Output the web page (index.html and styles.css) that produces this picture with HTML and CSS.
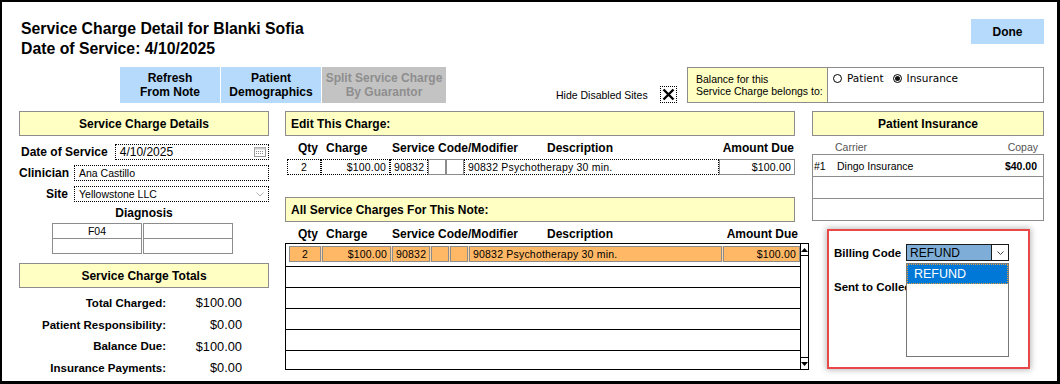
FILE: index.html
```html
<!DOCTYPE html>
<html lang="en">
<head>
    <meta charset="UTF-8">
    <title>Service Charge Detail</title>
    <link rel="stylesheet" href="styles.css">
</head>
<body>
    <div class="frame">
        <div class="top">
            <h1 class="title">Service Charge Detail for Blanki Sofia<br>Date of Service: 4/10/2025</h1>
            <button class="btn done">Done</button>
        </div>

        <div class="toolbar">
            <button class="btn first">Refresh<br>From Note</button>
            <button class="btn">Patient<br>Demographics</button>
            <button class="btn disabled">Split Service Charge<br>By Guarantor</button>
            <div class="hide-sites">
                <span>Hide Disabled Sites</span>
                <span class="xbox">
                    <svg width="15" height="15" viewBox="0 0 15 15"><path d="M2.5 2.5 L12.5 12.5 M12.5 2.5 L2.5 12.5" stroke="#000" stroke-width="2.4"/></svg>
                </span>
            </div>
            <div class="balance">
                <div class="balance-label">Balance for this<br>Service Charge belongs to:</div>
                <div class="balance-opts">
                    <span class="radio"></span><span class="opt">Patient</span>
                    <span class="radio checked"></span><span class="opt">Insurance</span>
                </div>
            </div>
        </div>

        <div class="panels">
            <!-- left column -->
            <div class="col-left">
                <div class="head">Service Charge Details</div>
                <div class="field first-field">
                    <label class="lbl wide">Date of Service</label>
                    <div class="input date">
                        <span>4/10/2025</span>
                        <svg width="12" height="10" viewBox="0 0 12 10"><rect x="0.5" y="0.5" width="11" height="9" fill="#fff" stroke="#9a9a9a"/><rect x="0.5" y="0.5" width="11" height="2" fill="#c8c8c8"/><g fill="#8a8a8a"><rect x="2" y="4" width="1" height="1"/><rect x="4" y="4" width="1" height="1"/><rect x="6" y="4" width="1" height="1"/><rect x="8" y="4" width="1" height="1"/><rect x="2" y="6" width="1" height="1"/><rect x="4" y="6" width="1" height="1"/><rect x="6" y="6" width="1" height="1"/><rect x="8" y="6" width="1" height="1"/></g></svg>
                    </div>
                </div>
                <div class="field">
                    <label class="lbl">Clinician</label>
                    <div class="input">Ana Castillo</div>
                </div>
                <div class="field">
                    <label class="lbl">Site</label>
                    <div class="input">
                        <span>Yellowstone LLC</span>
                        <svg width="8" height="5" viewBox="0 0 8 5"><path d="M0.5 0.5 L4 4 L7.5 0.5" fill="none" stroke="#b0b0b0"/></svg>
                    </div>
                </div>
                <div class="diag-label">Diagnosis</div>
                <div class="diag">
                    <div class="dcell">F04</div>
                    <div class="dcell"></div>
                    <div class="dcell last"></div>
                    <div class="dcell last"></div>
                </div>

                <div class="head totals-head">Service Charge Totals</div>
                <div class="totals">
                    <span class="t-lbl">Total Charged:</span><span class="t-val">$100.00</span>
                    <span class="t-lbl">Patient Responsibility:</span><span class="t-val">$0.00</span>
                    <span class="t-lbl">Balance Due:</span><span class="t-val">$100.00</span>
                    <span class="t-lbl">Insurance Payments:</span><span class="t-val">$0.00</span>
                </div>
            </div>

            <!-- middle column -->
            <div class="col-mid">
                <div class="head text-left">Edit This Charge:</div>
                <div class="cols">
                    <span class="h-qty">Qty</span>
                    <span class="h-charge">Charge</span>
                    <span class="h-code">Service Code/Modifier</span>
                    <span class="h-desc">Description</span>
                    <span class="h-amt">Amount Due</span>
                </div>
                <div class="edit-row">
                    <div class="cell dot qty">2</div>
                    <div class="cell dot charge">$100.00</div>
                    <div class="cell dot code">90832</div>
                    <div class="cell mod"></div>
                    <div class="cell mod"></div>
                    <div class="cell dot desc">90832 Psychotherapy 30 min.</div>
                    <div class="cell amt">$100.00</div>
                </div>

                <div class="head text-left all-head">All Service Charges For This Note:</div>
                <div class="cols">
                    <span class="h-qty">Qty</span>
                    <span class="h-charge">Charge</span>
                    <span class="h-code">Service Code/Modifier</span>
                    <span class="h-desc">Description</span>
                    <span class="h-amt shift">Amount Due</span>
                </div>
                <div class="all-table">
                    <div class="rows">
                        <div class="trow">
                            <div class="sel-row">
                                <div class="cell qty">2</div>
                                <div class="cell charge">$100.00</div>
                                <div class="cell code">90832</div>
                                <div class="cell mod"></div>
                                <div class="cell mod"></div>
                                <div class="cell desc">90832 Psychotherapy 30 min.</div>
                                <div class="cell amt">$100.00</div>
                            </div>
                        </div>
                        <div class="trow"></div>
                        <div class="trow"></div>
                        <div class="trow"></div>
                        <div class="trow"></div>
                        <div class="trow"></div>
                    </div>
                    <div class="scrollbar">
                        <div class="sb-btn up"><svg width="7" height="4" viewBox="0 0 7 4"><path d="M0 4 L3.5 0 L7 4 Z" fill="#000"/></svg></div>
                        <div class="sb-btn down"><svg width="7" height="4" viewBox="0 0 7 4"><path d="M0 0 L3.5 4 L7 0 Z" fill="#000"/></svg></div>
                    </div>
                </div>
            </div>

            <!-- right column -->
            <div class="col-right">
                <div class="head">Patient Insurance</div>
                <div class="ins-cols"><span>Carrier</span><span>Copay</span></div>
                <div class="ins-table">
                    <div class="irow"><span class="num">#1</span><span class="carrier">Dingo Insurance</span><span class="copay">$40.00</span></div>
                    <div class="irow"></div>
                    <div class="irow"></div>
                </div>

                <div class="billing">
                    <div class="bc-row">
                        <span class="bc-lbl">Billing Code</span>
                        <div class="select">
                            <span>REFUND</span>
                            <span class="arrow"><svg width="7" height="4" viewBox="0 0 7 4"><path d="M0.5 0.5 L3.5 3.5 L6.5 0.5" fill="none" stroke="#444"/></svg></span>
                        </div>
                    </div>
                    <div class="bc-row sent">
                        <span class="bc-lbl">Sent to Collections</span>
                    </div>
                    <div class="droplist">
                        <div class="drop-item">REFUND</div>
                    </div>
                </div>
            </div>
        </div>
    </div>
</body>
</html>
```

FILE: styles.css
```css
body {
    margin: 0;
    font-family: "Liberation Sans", Arial, sans-serif;
    color: #000;
    background: #fff;
}
.frame {
    width: 1060px;
    height: 384px;
    box-sizing: border-box;
    border-style: solid;
    border-color: #000;
    border-width: 2px 3px 3px 2px;
    padding: 17px 13px 0 17px;
    overflow: hidden;
}
.top {
    display: flex;
    justify-content: space-between;
    align-items: flex-start;
}
.title {
    margin: 0;
    padding-left: 2px;
    font-size: 15.8px;
    line-height: 20px;
    font-weight: bold;
}
.btn {
    border: none;
    padding: 0;
    background: #b5dafc;
    color: #000;
    font: bold 12px/14px "Liberation Sans", Arial, sans-serif;
}
.done {
    width: 73px;
    height: 25px;
}
.toolbar {
    display: flex;
    height: 36px;
    margin-top: 8px;
}
.toolbar .btn {
    width: 100px;
    height: 36px;
    margin-right: 1px;
}
.toolbar .btn.first {
    margin-left: 101px;
}
.toolbar .btn.disabled {
    width: 124px;
    background: #c3c3c3;
    color: #8e8e8e;
}
.hide-sites {
    align-self: flex-end;
    display: flex;
    align-items: center;
    gap: 12px;
    margin-left: 109px;
    font-size: 10.5px;
}
.xbox {
    width: 17px;
    height: 17px;
    box-sizing: border-box;
    border: 1px dotted #000;
    display: flex;
    align-items: center;
    justify-content: center;
}
.balance {
    margin-left: auto;
    width: 357px;
    height: 36px;
    box-sizing: border-box;
    border: 1px solid #8c8c8c;
    display: flex;
}
.balance-label {
    width: 140px;
    box-sizing: border-box;
    background: #ffffc4;
    border-right: 1px solid #8c8c8c;
    padding: 5px 0 0 8px;
    font-size: 10.5px;
    line-height: 12px;
}
.balance-opts {
    display: flex;
    align-items: center;
    height: 12px;
    padding: 4px 0 0 5px;
    font-family: "DejaVu Sans", Verdana, sans-serif;
    font-size: 10.5px;
}
.radio {
    width: 9px;
    height: 9px;
    box-sizing: border-box;
    border: 1px solid #000;
    border-radius: 50%;
    margin-right: 5px;
    position: relative;
}
.radio.checked::after {
    content: "";
    position: absolute;
    left: 1px;
    top: 1px;
    width: 5px;
    height: 5px;
    border-radius: 50%;
    background: #111;
}
.opt {
    margin-right: 9px;
}

/* three columns */
.panels {
    display: flex;
    margin-top: 8px;
}
.col-left {
    width: 250px;
}
.col-mid {
    width: 510px;
    margin-left: 16px;
}
.col-right {
    width: 232px;
    margin-left: 17px;
}
.head {
    height: 25px;
    box-sizing: border-box;
    border: 1px solid #8c8c8c;
    background: #ffffc4;
    font-size: 12px;
    font-weight: bold;
    display: flex;
    align-items: center;
    justify-content: center;
}
.head.text-left {
    justify-content: flex-start;
    padding-left: 5px;
}

/* left */
.field {
    display: flex;
    align-items: center;
    gap: 6px;
    height: 16px;
    margin-top: 5px;
}
.field.first-field {
    margin-top: 8px;
}
.lbl {
    width: 49px;
    text-align: right;
    font-size: 12px;
    font-weight: bold;
}
.lbl.wide {
    width: auto;
    padding-left: 2px;
    margin-right: 1px;
}
.input {
    flex: 1;
    height: 16px;
    box-sizing: border-box;
    border: 1px dotted #000;
    padding: 0 4px;
    font-size: 10.5px;
    display: flex;
    align-items: center;
    justify-content: space-between;
}
.input.date {
    font-size: 12px;
    padding-right: 2px;
}
.diag-label {
    margin-top: 4px;
    text-align: center;
    font-size: 12px;
    line-height: 14px;
    font-weight: bold;
}
.diag {
    display: grid;
    grid-template-columns: 90px 90px;
    column-gap: 1px;
    margin: 3px 0 0 33px;
}
.dcell {
    height: 15px;
    box-sizing: border-box;
    border: 1px solid #8c8c8c;
    border-bottom: none;
    font-size: 10.5px;
    text-align: center;
    line-height: 14px;
}
.dcell.last {
    height: 16px;
    border-bottom: 1px solid #8c8c8c;
}
.totals-head {
    margin-top: 9px;
}
.totals {
    display: grid;
    grid-template-columns: 147px 76px;
    grid-auto-rows: 21.7px;
    align-items: center;
    margin-top: 4px;
}
.t-lbl {
    text-align: right;
    font-size: 11.5px;
    font-weight: bold;
}
.t-val {
    text-align: right;
    font-size: 12.8px;
}

/* middle */
.cols {
    display: flex;
    margin-top: 5px;
    font-size: 12px;
    line-height: 14px;
    font-weight: bold;
}
.h-qty {
    width: 28px;
    margin-left: 13px;
}
.h-charge {
    width: 66px;
}
.h-code {
    width: 155px;
}
.h-desc {
    flex: 1;
}
.h-amt {
    padding-right: 1px;
}
.h-amt.shift {
    margin-right: -4px;
}
.edit-row {
    display: flex;
    height: 16px;
    margin: 4px 0 0 2px;
}
.cell {
    height: 16px;
    box-sizing: border-box;
    border: 1px solid #8c8c8c;
    padding: 0 3px;
    font-size: 10.5px;
    letter-spacing: 0.2px;
    line-height: 14px;
    white-space: nowrap;
    overflow: hidden;
}
.cell.dot {
    border: 1px dotted #000;
}
.qty {
    width: 34px;
    text-align: center;
}
.charge {
    width: 69px;
    text-align: right;
}
.code {
    width: 38px;
}
.mod {
    width: 18px;
}
.desc {
    width: 255px;
}
.amt {
    width: 76px;
    text-align: right;
}
.all-head {
    margin-top: 22px;
}
.all-table {
    display: flex;
    height: 127px;
    margin-top: 2px;
}
.rows {
    width: 520px;
    box-sizing: border-box;
    border: 1px solid #000;
}
.trow {
    height: 21px;
    box-sizing: border-box;
    border-bottom: 1px solid #000;
}
.trow:last-child {
    border-bottom: none;
    height: 20px;
}
.sel-row {
    display: flex;
    gap: 1px;
    margin: 2px 0 0 3px;
    width: 511px;
    background: #ffd7a6;
}
.sel-row .cell {
    background: #ffb866;
}
.sel-row .qty {
    width: 32px;
}
.sel-row .desc {
    width: 253px;
}
.sel-row .amt {
    width: 77px;
}
.scrollbar {
    width: 12px;
    box-sizing: border-box;
    border: 1px solid #000;
    border-left: none;
    display: flex;
    flex-direction: column;
    justify-content: space-between;
}
.sb-btn {
    height: 11px;
    display: flex;
    align-items: center;
    justify-content: center;
}
.sb-btn.up {
    border-bottom: 1px solid #000;
}
.sb-btn.down {
    border-top: 1px solid #000;
}

/* right */
.ins-cols {
    display: flex;
    justify-content: space-between;
    margin-top: 5px;
    padding: 0 6px 0 23px;
    font-size: 10.5px;
    line-height: 12px;
    color: #555;
}
.ins-table {
    margin-top: 1px;
    border: 1px solid #8c8c8c;
}
.irow {
    height: 22px;
    box-sizing: border-box;
    border-bottom: 1px solid #8c8c8c;
    display: flex;
    align-items: center;
    font-size: 10.5px;
    padding: 0 6px 0 1px;
}
.irow:last-child {
    border-bottom: none;
    height: 21px;
}
.num {
    width: 23px;
}
.carrier {
    flex: 1;
}
.copay {
    font-weight: bold;
}
.billing {
    position: relative;
    width: 203px;
    height: 140px;
    box-sizing: border-box;
    margin: 8px 0 0 15px;
    padding: 13px 0 0 5px;
    border: 2px solid #e84848;
    box-shadow: 0 0 6px 1px rgba(0, 0, 0, 0.28);
    overflow: hidden;
}
.bc-row {
    display: flex;
    align-items: center;
    height: 17px;
}
.bc-row.sent {
    margin-top: 17px;
}
.bc-lbl {
    width: 72px;
    font-size: 11.5px;
    font-weight: bold;
    white-space: nowrap;
}
.select {
    width: 103px;
    height: 17px;
    box-sizing: border-box;
    border: 1px solid #1a1a1a;
    background: #7eaed8;
    display: flex;
    align-items: center;
    justify-content: space-between;
    padding-left: 3px;
    font-size: 12px;
}
.arrow {
    width: 16px;
    height: 15px;
    background: #fff;
    border-left: 1px solid #1a1a1a;
    display: flex;
    align-items: center;
    justify-content: center;
}
.droplist {
    position: absolute;
    left: 77px;
    top: 32px;
    width: 103px;
    height: 94px;
    box-sizing: border-box;
    border: 1px solid #777;
    background: #fff;
}
.drop-item {
    height: 20px;
    box-sizing: border-box;
    border: 1px dotted #e0a040;
    background: #0078d7;
    color: #fff;
    font-size: 12.5px;
    line-height: 18px;
    padding-left: 6px;
}
```
